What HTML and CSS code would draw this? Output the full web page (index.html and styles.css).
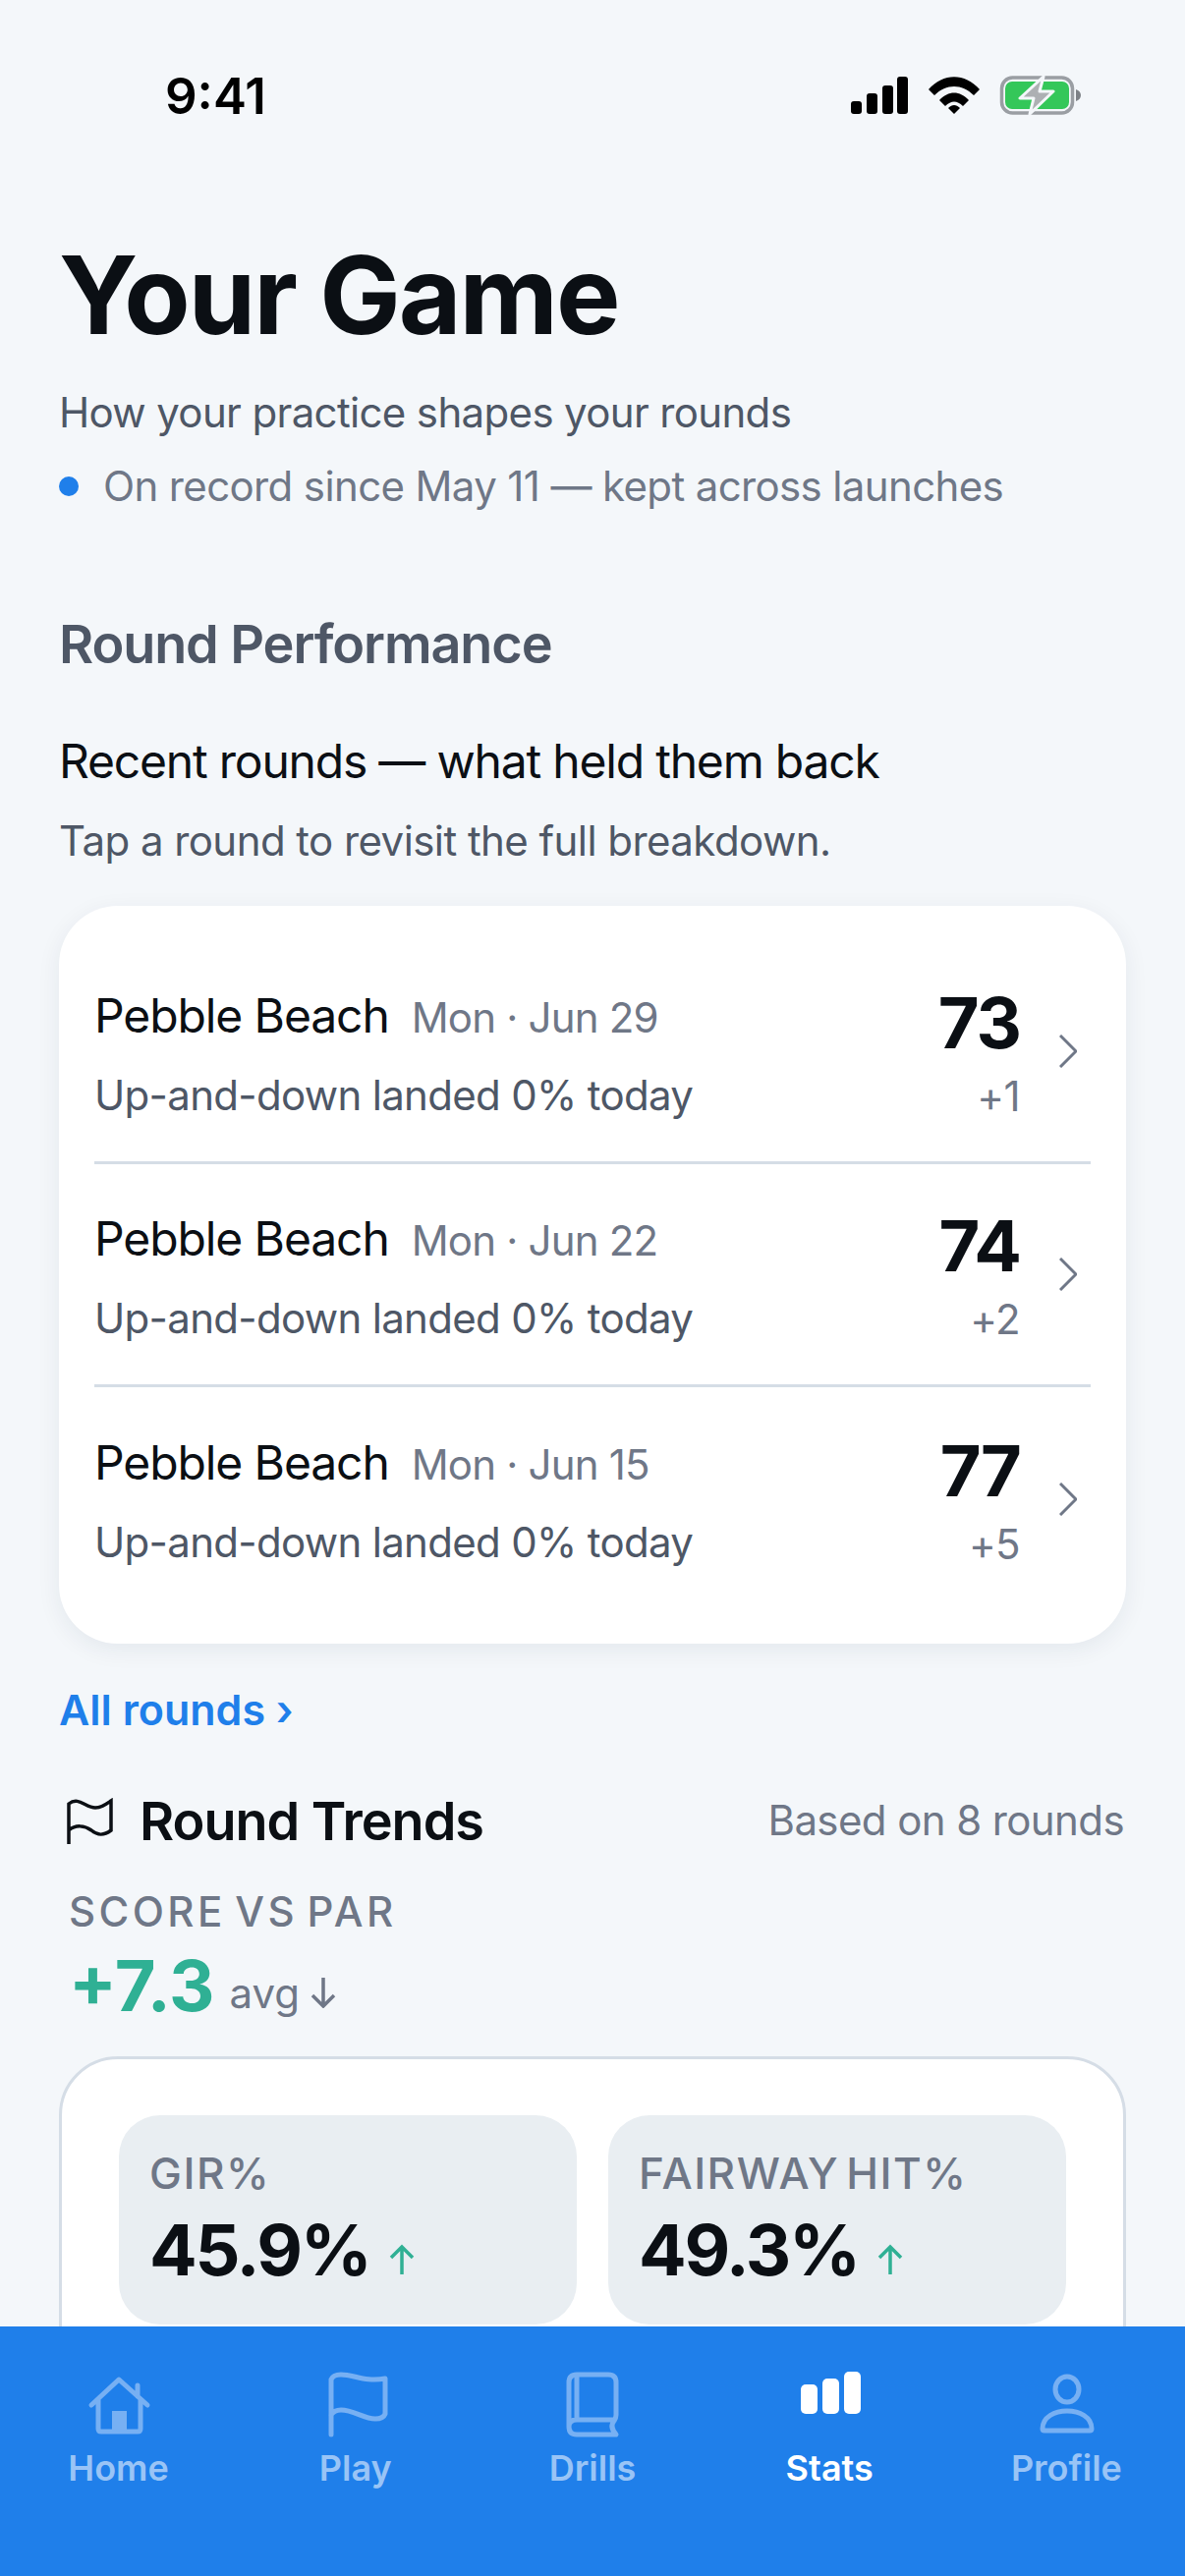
FILE: index.html
```html
<!DOCTYPE html>
<html lang="en">
<head>
<meta charset="UTF-8">
<title>Your Game</title>
<link rel="stylesheet" href="styles.css">
</head>
<body>

<!-- scrolling content -->
<main class="content">
    <div class="status">
        <span class="time">9:41</span>
        <div class="status-icons">
            <svg width="60" height="38" viewBox="0 0 60 38"><rect x="1" y="25" width="11" height="13" rx="3"/><rect x="17" y="17" width="11" height="21" rx="3"/><rect x="33" y="9" width="11" height="29" rx="3"/><rect x="48" y="0" width="11" height="38" rx="3"/></svg>
            <svg width="52" height="38" viewBox="0 0 52 38"><path d="M0 13 C15 -4 37 -4 52 13 L46 19 C34 7 18 7 6 19 Z"/><path d="M11 24 C20 14 32 14 41 24 L35 30 C29 24 23 24 17 30 Z"/><path d="M20 32 C24 28 28 28 32 32 L26 38 Z"/></svg>
            <svg width="84" height="40" viewBox="0 0 84 40">
                <rect x="2.5" y="2" width="72" height="36" rx="11" fill="none" stroke="#9a9ea3" stroke-width="3.5"/>
                <rect x="6" y="6" width="65" height="28" rx="7" fill="#34c759"/>
                <path d="M78 14 C81 15 83 17 83 20 C83 23 81 25 78 26 Z" fill="#7d8186"/>
                <path d="M45 1 L21 23 H35 L31 39 L55 16 H41 Z" fill="#adb0b3" stroke="#f4f7fa" stroke-width="3" stroke-linejoin="round"/>
            </svg>
        </div>
    </div>

    <h1>Your Game</h1>
    <p class="subtitle">How your practice shapes your rounds</p>
    <p class="record"><span class="dot"></span>On record since May 11 — kept across launches</p>

    <h2>Round Performance</h2>
    <h3>Recent rounds — what held them back</h3>
    <p class="hint">Tap a round to revisit the full breakdown.</p>

    <section class="rounds">
        <div class="round">
            <div class="round-main">
                <div class="round-top"><span class="course">Pebble Beach</span><span class="date">Mon · Jun 29</span></div>
                <div class="round-note">Up-and-down landed 0% today</div>
            </div>
            <div class="round-score"><b>73</b><span>+1</span></div>
            <svg class="chev" width="18" height="34" viewBox="0 0 18 34"><path d="M1 1 L17 17 L1 33"/></svg>
        </div>
        <div class="round">
            <div class="round-main">
                <div class="round-top"><span class="course">Pebble Beach</span><span class="date">Mon · Jun 22</span></div>
                <div class="round-note">Up-and-down landed 0% today</div>
            </div>
            <div class="round-score"><b>74</b><span>+2</span></div>
            <svg class="chev" width="18" height="34" viewBox="0 0 18 34"><path d="M1 1 L17 17 L1 33"/></svg>
        </div>
        <div class="round">
            <div class="round-main">
                <div class="round-top"><span class="course">Pebble Beach</span><span class="date">Mon · Jun 15</span></div>
                <div class="round-note">Up-and-down landed 0% today</div>
            </div>
            <div class="round-score"><b>77</b><span>+5</span></div>
            <svg class="chev" width="18" height="34" viewBox="0 0 18 34"><path d="M1 1 L17 17 L1 33"/></svg>
        </div>
    </section>

    <a class="all-link">All rounds ›</a>

    <div class="trends-head">
        <svg width="50" height="48" viewBox="0 0 50 48"><path d="M3 47 V6 C13 -2 20 10 30 10 C36 10 40 7 46 3 V33 C38 39 32 38 26 33 C19 28 10 27 3 33"/></svg>
        <span class="trends-title">Round Trends</span>
        <span class="trends-note">Based on 8 rounds</span>
    </div>

    <div class="par-label">SCORE VS PAR</div>
    <div class="par-row">
        <span class="par-value">+7.3</span>
        <span class="par-unit">avg</span>
        <svg width="28" height="32" viewBox="0 0 28 32"><path d="M14 1 V30 M3 19 L14 30 L25 19"/></svg>
    </div>

    <section class="tiles-card">
        <div class="tile">
            <div class="tile-label">GIR%</div>
            <div class="tile-value">45.9%<svg width="28" height="32" viewBox="0 0 28 32"><path d="M14 31 V3 M3 14 L14 3 L25 14"/></svg></div>
        </div>
        <div class="tile">
            <div class="tile-label">FAIRWAY HIT%</div>
            <div class="tile-value">49.3%<svg width="28" height="32" viewBox="0 0 28 32"><path d="M14 31 V3 M3 14 L14 3 L25 14"/></svg></div>
        </div>
    </section>
</main>

<!-- tab bar -->
<nav class="tabs">
    <div class="tab">
        <svg width="64" height="64" viewBox="0 0 64 64"><path d="M4 34 L32 8 L61 34 M11 28 V58 Q11 61 14 61 H51 Q54 61 54 58 V28 M51 25 V14"/><rect x="25" y="40" width="15" height="21" fill="currentColor" stroke="none"/></svg>
        <span>Home</span>
    </div>
    <div class="tab">
        <svg width="64" height="64" viewBox="0 0 64 64"><path d="M7 64 V8 Q9 3 17 3 C30 3 42 11 62 7 V43 Q60 48 52 48 C40 48 30 39 17 39 Q10 39 7 44"/></svg>
        <span>Play</span>
    </div>
    <div class="tab">
        <svg width="64" height="64" viewBox="0 0 64 64"><path d="M8 56 V11 Q8 3 16 3 H48 Q56 3 56 11 V44 Q56 47 54 50 Q49 56 56 64 H16 Q8 64 8 56 Q8 49 16 49 H54 M16 3 V49"/></svg>
        <span>Drills</span>
    </div>
    <div class="tab active">
        <svg width="64" height="64" viewBox="0 0 64 64"><rect x="3" y="13" width="17" height="30" rx="5" class="solid"/><rect x="25" y="7" width="17" height="36" rx="5" class="solid"/><rect x="47" y="0" width="17" height="43" rx="5" class="solid"/></svg>
        <span>Stats</span>
    </div>
    <div class="tab">
        <svg width="64" height="64" viewBox="0 0 64 64"><ellipse cx="33" cy="18" rx="12" ry="13"/><path d="M8 58 C8 34 58 34 58 58 Q58 60 56 60 H10 Q8 60 8 58 Z"/></svg>
        <span>Profile</span>
    </div>
</nav>

</body>
</html>
```

FILE: styles.css
```css
* {
    box-sizing: border-box;
}

html, body {
    height: 100%;
}

body {
    margin: 0;
    width: 1206px;
    height: 2622px;
    display: flex;
    flex-direction: column;
    overflow: hidden;
    font-family: Inter, "Liberation Sans", sans-serif;
    background: #f4f7fa;
    color: #0b0f14;
}

.content {
    flex: 1;
    min-height: 0;
    overflow: hidden;
    padding: 0 60px;
}

/* status bar */
.status {
    display: flex;
    justify-content: space-between;
    align-items: center;
    height: 40px;
    margin-top: 77px;
    padding: 0 45px 0 108px;
}

.time {
    font-size: 51px;
    font-weight: 600;
    color: #000;
}

.status-icons {
    display: flex;
    align-items: center;
    gap: 20px;
}

/* header */
h1 {
    margin: 123px 0 0;
    font-size: 110px;
    line-height: 120px;
    font-weight: 700;
    letter-spacing: -2px;
}

.subtitle {
    margin: 35px 0 0;
    font-size: 42px;
    line-height: 50px;
    letter-spacing: -0.65px;
    color: #4e5766;
}

.record {
    display: flex;
    align-items: center;
    margin: 25px 0 0;
    font-size: 42px;
    line-height: 50px;
    letter-spacing: -0.63px;
    color: #6f7787;
}

.dot {
    width: 20px;
    height: 20px;
    margin-right: 25px;
    border-radius: 50%;
    background: #1f7fea;
}

h2 {
    margin: 106px 0 0;
    font-size: 54px;
    line-height: 60px;
    font-weight: 600;
    letter-spacing: -1.1px;
    color: #4e5766;
}

h3 {
    margin: 60px 0 0;
    font-size: 48px;
    line-height: 58px;
    font-weight: 400;
    letter-spacing: -1.2px;
}

.hint {
    margin: 27px 0 0;
    font-size: 42px;
    line-height: 50px;
    letter-spacing: -0.56px;
    color: #4e5766;
}

/* recent rounds card */
.rounds {
    margin-top: 41px;
    padding: 36px 36px 34px;
    background: #fff;
    border-radius: 60px;
    box-shadow: 0 6px 24px rgba(20, 40, 70, 0.07);
}

.round {
    display: flex;
    align-items: center;
    height: 227px;
    border-bottom: 3px solid #d5dde6;
}

.round:last-child {
    border-bottom: none;
}

.round-main {
    flex: 1;
    padding-top: 4px;
}

.round-top {
    display: flex;
    align-items: baseline;
    gap: 23px;
}

.course {
    font-size: 48px;
    line-height: 58px;
    letter-spacing: -1.1px;
}

.date {
    font-size: 42px;
    letter-spacing: -0.8px;
    color: #6f7787;
}

.round-note {
    margin-top: 27px;
    font-size: 42px;
    line-height: 50px;
    letter-spacing: -0.68px;
    color: #4e5766;
}

.round-score {
    display: flex;
    flex-direction: column;
    align-items: flex-end;
}

.round-score b {
    font-size: 72px;
    line-height: 84px;
    font-weight: 700;
    letter-spacing: -2px;
}

.round-score span {
    margin-top: 8px;
    font-size: 42px;
    line-height: 50px;
    letter-spacing: -0.6px;
    color: #6f7787;
}

.chev {
    margin-left: 40px;
    margin-right: 14px;
    fill: none;
    stroke: #6f7787;
    stroke-width: 3;
}

.all-link {
    display: block;
    margin-top: 42px;
    font-size: 43px;
    line-height: 50px;
    font-weight: 600;
    color: #1f7fea;
}

/* trends */
.trends-head {
    display: flex;
    align-items: center;
    margin-top: 58px;
}

.trends-head svg {
    margin-left: 7px;
    margin-right: 25px;
    fill: none;
    stroke: #0b0f14;
    stroke-width: 3.5;
}

.trends-title {
    flex: 1;
    font-size: 54px;
    line-height: 62px;
    font-weight: 600;
    letter-spacing: -1px;
}

.trends-note {
    margin: 0 2px 3px 0;
    font-size: 42px;
    letter-spacing: -0.6px;
    color: #6f7787;
}

.par-label {
    margin: 36px 0 0 10px;
    font-size: 42px;
    line-height: 50px;
    font-weight: 500;
    letter-spacing: 3.4px;
    word-spacing: -5px;
    color: #6f7787;
}

.par-row {
    display: flex;
    align-items: flex-end;
    margin: 8px 0 0 10px;
}

.par-value {
    font-size: 72px;
    line-height: 84px;
    font-weight: 700;
    color: #2fb094;
}

.par-unit {
    margin: 0 0 9px 15px;
    font-size: 42px;
    line-height: 50px;
    color: #6f7787;
}

.par-row svg {
    margin: 0 0 19px 10px;
    fill: none;
    stroke: #6f7787;
    stroke-width: 3.5;
}

.tiles-card {
    display: grid;
    grid-template-columns: 1fr 1fr;
    gap: 32px;
    margin-top: 30px;
    padding: 57px 58px;
    background: #fff;
    border: 3px solid #d5dde6;
    border-radius: 60px;
}

.tile {
    height: 213px;
    padding: 34px 31px;
    background: #e9eef2;
    border-radius: 42px;
}

.tile-label {
    font-size: 44px;
    line-height: 50px;
    font-weight: 500;
    letter-spacing: 1.5px;
    word-spacing: -6px;
    color: #6f7787;
}

.tile-value {
    display: flex;
    align-items: center;
    margin-top: 11px;
    font-size: 72px;
    line-height: 84px;
    font-weight: 700;
    letter-spacing: -2.3px;
}

.tile-value svg {
    margin: 20px 0 0 18px;
    fill: none;
    stroke: #2fb094;
    stroke-width: 3.5;
}

/* tab bar */
.tabs {
    flex: none;
    display: grid;
    grid-template-columns: repeat(5, 1fr);
    height: 254px;
    padding-top: 46px;
    background: #1f7fea;
}

.tab {
    display: flex;
    flex-direction: column;
    align-items: center;
    color: #77b0f3;
}

.tab svg {
    overflow: visible;
    fill: none;
    stroke: currentColor;
    stroke-width: 5;
    stroke-linecap: round;
    stroke-linejoin: round;
}

.tab span {
    margin-top: 12px;
    font-size: 36px;
    line-height: 44px;
    font-weight: 600;
    color: #99c4f6;
}

.tab.active span {
    color: #fff;
}

.tab.active .solid {
    fill: #fff;
    stroke: none;
}
```
